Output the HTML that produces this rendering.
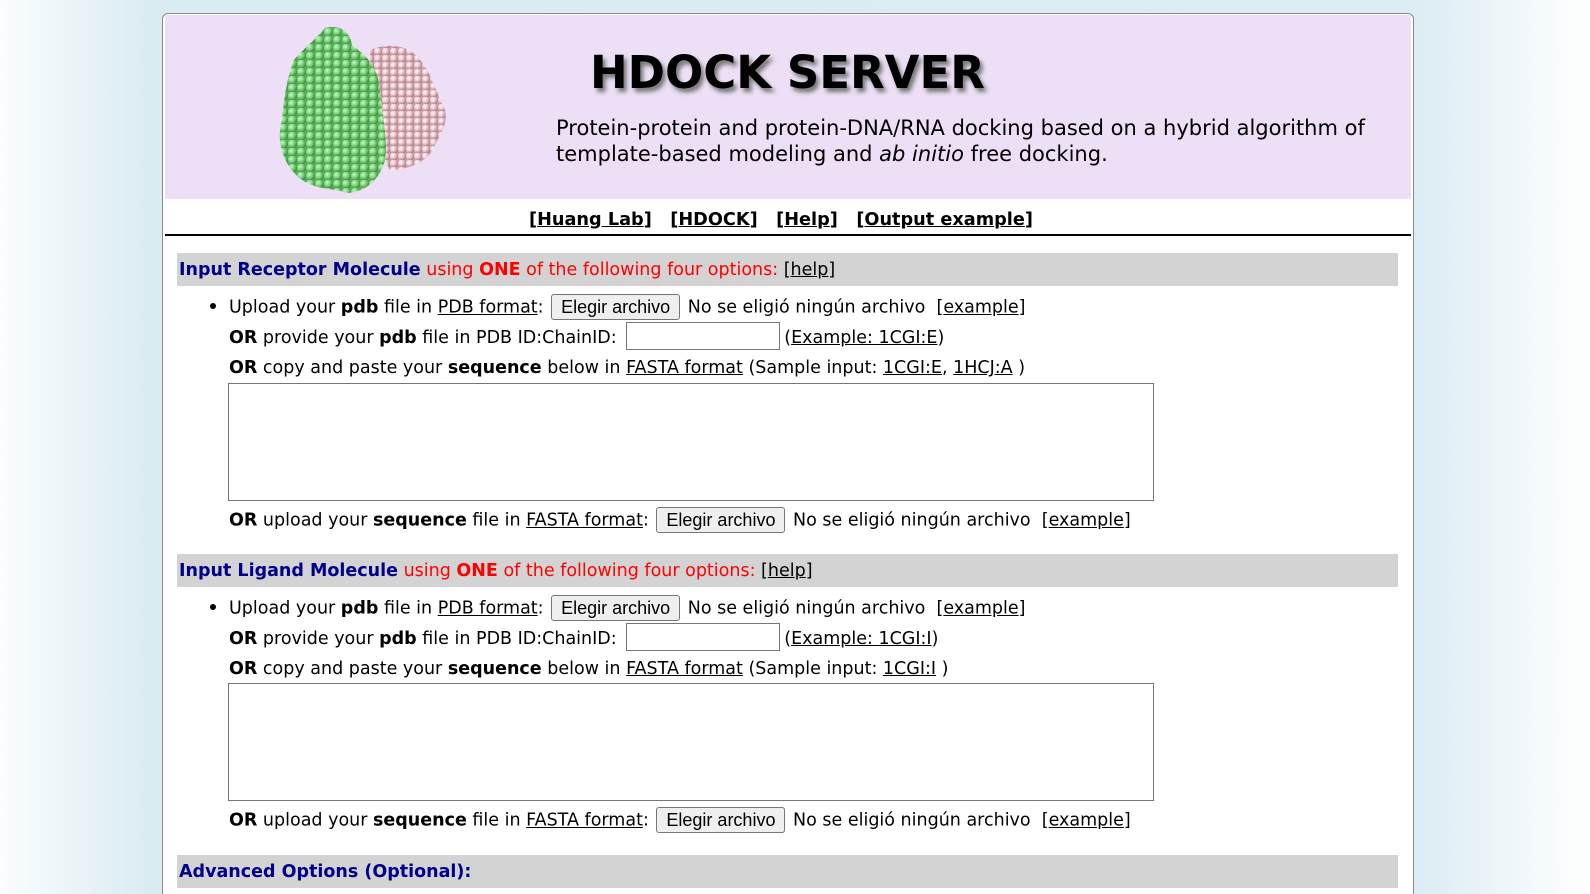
<!DOCTYPE html>
<html><head><meta charset="utf-8"><style>
html,body{margin:0;padding:0;width:1590px;height:894px;overflow:hidden;}
body{background:linear-gradient(90deg,#fbfdfe 0px,#d9ecf2 150px,#dcedf3 1420px,#ffffff 1590px);font-family:"DejaVu Sans",Verdana,sans-serif;font-size:17.5px;color:#000;position:relative;}
#box{position:absolute;left:162px;top:13px;width:1250px;height:900px;background:#fff;border:1px solid #8a8a8a;border-radius:6px;}
#hdr{position:absolute;left:165px;top:15px;width:1246px;height:184px;background:#ecdff6;}
.abs{position:absolute;white-space:nowrap;}
h1{position:absolute;left:590px;top:46px;margin:0;font-size:45px;font-weight:bold;letter-spacing:0;text-shadow:3px 4px 4px #777;}
.desc{left:556px;top:116px;font-size:21px;line-height:25.5px;}
.nav{top:210px;left:529px;font-weight:bold;font-size:17.7px;}
#line{position:absolute;left:165px;top:234px;width:1246px;height:2px;background:#000;}
.bar{position:absolute;left:177px;width:1221px;height:33px;background:#d3d3d3;}
.bar span.t{position:absolute;left:2px;top:7px;white-space:nowrap;font-size:17.5px;}
.b{color:#00008b;font-weight:bold}.r{color:#f00}
.row{position:absolute;left:229px;white-space:nowrap;line-height:22px;}
.btn{display:inline-block;font-family:"Liberation Sans",Arial,sans-serif;font-size:18px;background:#efefef;border:1px solid #767676;border-radius:3px;padding:2px 9px;line-height:20px;vertical-align:middle;margin:-1px 2px 0;}
.inp{display:inline-block;width:152px;height:26px;border:1px solid #767676;vertical-align:middle;margin:-4px 4px 0;}
.ta{position:absolute;left:228px;width:924px;height:116px;border:1px solid #767676;background:#fff;}
.dot{position:absolute;left:210px;width:6px;height:6px;border-radius:50%;background:#000;}
</style></head><body>
<div id="box"></div>
<div id="hdr"></div>
<svg class="abs" style="left:270px;top:20px" width="190" height="180" viewBox="0 0 190 180">
<defs>
<radialGradient id="gg" cx="35%" cy="35%" r="65%"><stop offset="0" stop-color="#c8f5c8"/><stop offset=".5" stop-color="#7ed67e"/><stop offset="1" stop-color="#3f8f3f"/></radialGradient>
<radialGradient id="pg" cx="35%" cy="35%" r="65%"><stop offset="0" stop-color="#fff"/><stop offset=".5" stop-color="#f0c4cc"/><stop offset="1" stop-color="#a88088"/></radialGradient>
<pattern id="gp" width="9" height="8" patternUnits="userSpaceOnUse"><rect width="9" height="8" fill="#5aa85a"/><circle cx="4.5" cy="4" r="4.6" fill="url(#gg)"/></pattern>
<pattern id="pp" width="8" height="7" patternUnits="userSpaceOnUse"><rect width="8" height="7" fill="#c79aa2"/><circle cx="4" cy="3.5" r="4.2" fill="url(#pg)"/></pattern>
</defs>
<path d="M100 30 C120 22 140 26 150 40 C160 50 165 70 175 90 C178 105 170 115 165 125 C160 140 140 150 120 150 C108 130 100 80 100 30Z" fill="url(#pp)"/>
<path d="M55 8 C70 4 80 12 82 25 C95 35 108 45 110 70 C112 95 118 120 115 140 C110 160 95 172 78 173 C62 168 48 170 32 160 C12 145 6 120 12 100 C14 75 18 55 24 40 C34 28 45 20 55 8Z" fill="url(#gp)"/>
</svg>
<h1>HDOCK SERVER</h1>
<div class="abs desc">Protein-protein and protein-DNA/RNA docking based on a hybrid algorithm of<br>template-based modeling and <i>ab initio</i> free docking.</div>
<div class="abs nav">[<u>Huang Lab</u>]&nbsp;&nbsp;&nbsp;[<u>HDOCK</u>]&nbsp;&nbsp;&nbsp;[<u>Help</u>]&nbsp;&nbsp;&nbsp;[<u>Output example</u>]</div>
<div id="line"></div>

<div class="bar" style="top:253px"><span class="t"><span class="b">Input Receptor Molecule</span> <span class="r">using <b>ONE</b> of the following four options:</span> [<u>help</u>]</span></div>
<div class="dot" style="top:303px"></div>
<div class="row" style="top:295px">Upload your <b>pdb</b> file in <u>PDB format</u>: <span class="btn">Elegir archivo</span> No se eligió ningún archivo&nbsp;&nbsp;[<u>example</u>]</div>
<div class="row" style="top:326px"><b>OR</b> provide your <b>pdb</b> file in PDB ID:ChainID: <span class="inp"></span>(<u>Example: 1CGI:E</u>)</div>
<div class="row" style="top:357px"><b>OR</b> copy and paste your <b>sequence</b> below in <u>FASTA format</u> (Sample input: <u>1CGI:E</u>, <u>1HCJ:A</u> )</div>
<div class="ta" style="top:383px"></div>
<div class="row" style="top:508px"><b>OR</b> upload your <b>sequence</b> file in <u>FASTA format</u>: <span class="btn">Elegir archivo</span> No se eligió ningún archivo&nbsp;&nbsp;[<u>example</u>]</div>

<div class="bar" style="top:554px"><span class="t"><span class="b">Input Ligand Molecule</span> <span class="r">using <b>ONE</b> of the following four options:</span> [<u>help</u>]</span></div>
<div class="dot" style="top:604px"></div>
<div class="row" style="top:596px">Upload your <b>pdb</b> file in <u>PDB format</u>: <span class="btn">Elegir archivo</span> No se eligió ningún archivo&nbsp;&nbsp;[<u>example</u>]</div>
<div class="row" style="top:627px"><b>OR</b> provide your <b>pdb</b> file in PDB ID:ChainID: <span class="inp"></span>(<u>Example: 1CGI:I</u>)</div>
<div class="row" style="top:658px"><b>OR</b> copy and paste your <b>sequence</b> below in <u>FASTA format</u> (Sample input: <u>1CGI:I</u> )</div>
<div class="ta" style="top:683px"></div>
<div class="row" style="top:808px"><b>OR</b> upload your <b>sequence</b> file in <u>FASTA format</u>: <span class="btn">Elegir archivo</span> No se eligió ningún archivo&nbsp;&nbsp;[<u>example</u>]</div>

<div class="bar" style="top:855px"><span class="t"><span class="b">Advanced Options (Optional):</span></span></div>
</body></html>
